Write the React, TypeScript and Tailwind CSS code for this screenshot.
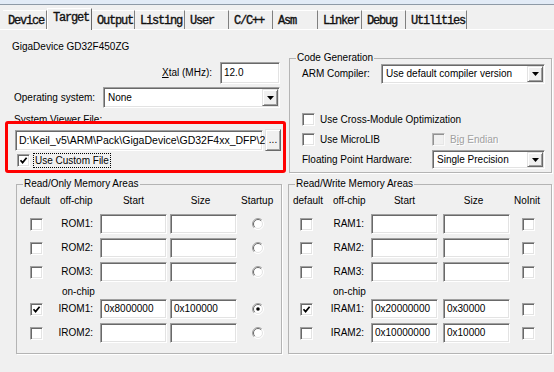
import React from "react";

const SUNKEN =
  "border border-t-[#a0a0a0] border-l-[#a0a0a0] border-b-white border-r-white shadow-[inset_1px_1px_0_#696969,inset_-1px_-1px_0_#e3e3e3]";
const RAISED =
  "border border-t-[#e3e3e3] border-l-[#e3e3e3] border-b-[#696969] border-r-[#696969] shadow-[inset_1px_1px_0_#ffffff,inset_-1px_-1px_0_#a0a0a0] bg-[#f0f0f0]";

function Check({ checked, disabled }: { checked?: boolean; disabled?: boolean }) {
  return (
    <div
      className={`w-[13px] h-[13px] shrink-0 flex items-center justify-center ${SUNKEN} ${
        disabled ? "bg-[#f0f0f0] opacity-70" : "bg-white"
      }`}
    >
      {checked && (
        <svg width="9" height="9" viewBox="0 0 9 9">
          <path d="M1.5 4.2 L3.6 6.6 L7.6 1.8" fill="none" stroke="#000" strokeWidth="1.7" />
        </svg>
      )}
    </div>
  );
}

function Radio({ on }: { on?: boolean }) {
  return (
    <svg width="12" height="12" viewBox="0 0 12 12" className="shrink-0">
      <circle cx="6" cy="6" r="5.5" fill="#ffffff" />
      <path d="M2.1 9.9 A5.5 5.5 0 0 1 9.9 2.1" stroke="#a0a0a0" strokeWidth="1" fill="none" />
      <path d="M2.8 9.2 A4.5 4.5 0 0 1 9.2 2.8" stroke="#696969" strokeWidth="1" fill="none" />
      <path d="M9.9 2.1 A5.5 5.5 0 0 1 2.1 9.9" stroke="#ffffff" strokeWidth="1" fill="none" />
      <path d="M9.2 2.8 A4.5 4.5 0 0 1 2.8 9.2" stroke="#e3e3e3" strokeWidth="1" fill="none" />
      {on && <circle cx="6" cy="6" r="1.8" fill="#000" />}
    </svg>
  );
}

function Arrow() {
  return (
    <div className={`w-[16px] shrink-0 flex items-center justify-center ${RAISED}`}>
      <svg width="7" height="4" viewBox="0 0 7 4">
        <path d="M0 0 H7 L3.5 4 Z" fill="#000" />
      </svg>
    </div>
  );
}

function Field({ value, className }: { value?: string; className: string }) {
  return (
    <div className={`${SUNKEN} bg-white shrink-0 flex items-center pl-[3px] whitespace-nowrap ${className}`}>
      {value}
    </div>
  );
}

function Select({ value, className }: { value: string; className: string }) {
  return (
    <div className={`${SUNKEN} bg-white shrink-0 flex items-stretch p-[1px] ${className}`}>
      <div className="flex-1 flex items-center pl-[3px] whitespace-nowrap">{value}</div>
      <Arrow />
    </div>
  );
}

const tabs = [
  { label: "Device", w: "w-[44px]" },
  { label: "Target", w: "w-[45px]", sel: true },
  { label: "Output", w: "w-[43px]" },
  { label: "Listing", w: "w-[50px]" },
  { label: "User", w: "w-[44px]" },
  { label: "C/C++", w: "w-[44px]" },
  { label: "Asm", w: "w-[45px]" },
  { label: "Linker", w: "w-[44px]" },
  { label: "Debug", w: "w-[44px]" },
  { label: "Utilities", w: "w-[61px]" },
];

const romRows = [
  { cb: false, label: "ROM1:", start: "", size: "", on: false },
  { cb: false, label: "ROM2:", start: "", size: "", on: false },
  { cb: false, label: "ROM3:", start: "", size: "", on: false },
];
const iromRows = [
  { cb: true, label: "IROM1:", start: "0x8000000", size: "0x100000", on: true },
  { cb: false, label: "IROM2:", start: "", size: "", on: false },
];
const ramRows = [
  { cb: false, label: "RAM1:", start: "", size: "" },
  { cb: false, label: "RAM2:", start: "", size: "" },
  { cb: false, label: "RAM3:", start: "", size: "" },
];
const iramRows = [
  { cb: true, label: "IRAM1:", start: "0x20000000", size: "0x30000" },
  { cb: false, label: "IRAM2:", start: "0x10000000", size: "0x10000" },
];

function RomRow({ r }: { r: { cb: boolean; label: string; start: string; size: string; on: boolean } }) {
  return (
    <div className="flex items-center h-[20px]">
      <div className="ml-[13px]">
        <Check checked={r.cb} />
      </div>
      <div className="w-[54px] text-right pr-[4px]">{r.label}</div>
      <Field value={r.start} className="ml-[3px] w-[67px] h-[20px]" />
      <Field value={r.size} className="ml-[3px] w-[67px] h-[20px]" />
      <div className="ml-[15px]">
        <Radio on={r.on} />
      </div>
    </div>
  );
}

function RamRow({ r }: { r: { cb: boolean; label: string; start: string; size: string } }) {
  return (
    <div className="flex items-center h-[20px]">
      <div className="ml-[11px]">
        <Check checked={r.cb} />
      </div>
      <div className="w-[55px] text-right pr-[4px]">{r.label}</div>
      <Field value={r.start} className="ml-[3px] w-[67px] h-[20px]" />
      <Field value={r.size} className="ml-[5px] w-[67px] h-[20px]" />
      <div className="ml-[12px]">
        <Check />
      </div>
    </div>
  );
}

export default function App() {
  return (
    <div className="w-[554px] h-[372px] overflow-hidden bg-[#f0f0f0] text-black text-[10px] leading-[12px] font-['Liberation_Sans',Arial,sans-serif]">
      {/* window edge */}
      <div className="h-[4px] bg-[#e2ebf6]" />
      <div className="h-[1px] bg-[#8e9aa6]" />

      {/* tabs */}
      <div className="h-[24px] flex items-end pl-[3px] font-['Liberation_Mono','Courier_New',monospace] text-[12px] tracking-[-1.2px] text-[#111]">
        {tabs.map((t) =>
          t.sel ? (
            <div
              key={t.label}
              className={`${t.w} h-[22px] -mb-px relative z-10 bg-[#f0f0f0] border-l border-t border-l-white border-t-white border-r border-r-[#696969] pl-[5px] pt-[2px] leading-[14px] [-webkit-text-stroke:0.35px_#111]`}
            >
              {t.label}
            </div>
          ) : (
            <div
              key={t.label}
              className={`${t.w} h-[19px] border-t border-t-white border-r border-r-[#808080] pl-[5px] pt-[3px] leading-[14px] [-webkit-text-stroke:0.35px_#111]`}
            >
              {t.label}
            </div>
          )
        )}
      </div>

      {/* panel */}
      <div className="border-t border-t-white">
        <div className="flex">
          {/* left column */}
          <div className="w-[288px] shrink-0">
            <div className="pt-[11px] pl-[12px]">GigaDevice GD32F450ZG</div>
            <div className="mt-[9px] h-[22px] flex items-center justify-end pr-[8px]">
              <span>
                <span className="underline">X</span>tal (MHz):
              </span>
              <Field value="12.0" className="ml-[8px] w-[60px] h-[22px]" />
            </div>
            <div className="mt-[3px] h-[21px] flex items-center">
              <div className="w-[103px] pl-[14px]">Operating system:</div>
              <Select value="None" className="w-[177px] h-[21px]" />
            </div>
            <div className="mt-[6px] pl-[14px]">System Viewer File:</div>
            <div className="-mt-[5px] ml-[5px] w-[281px] h-[52px] border-[3px] border-[#ff0000] rounded-[3px] relative bg-[#f0f0f0]">
              <div className="pt-[5px] pl-[7px] flex items-center">
                <Field
                  value="D:\Keil_v5\ARM\Pack\GigaDevice\GD32F4xx_DFP\2"
                  className="w-[248px] h-[21px] text-[10.5px]"
                />
                <div className={`ml-[2px] w-[16px] h-[22px] flex items-end justify-center pb-[4px] ${RAISED}`}>
                  ...
                </div>
              </div>
              <div className="mt-[2px] flex items-center h-[15px]">
                <div className="ml-[9px]">
                  <Check checked />
                </div>
                <div className="ml-[3px] border border-dotted border-black px-[1px] leading-[13px]">
                  Use Custom File
                </div>
              </div>
            </div>
          </div>

          {/* Code generation */}
          <fieldset className="mt-[22px] ml-[1px] w-[263px] h-[121px] border border-[#b4b4b4] shadow-[1px_1px_0_#ffffff]">
            <legend className="ml-[6px] px-[1px]">Code Generation</legend>
            <div className="h-[20px] flex items-center">
              <div className="w-[91px] pl-[12px]">ARM Compiler:</div>
              <Select value="Use default compiler version" className="w-[164px] h-[20px]" />
            </div>
            <div className="mt-[29px] h-[13px] flex items-center">
              <div className="ml-[12px]">
                <Check />
              </div>
              <div className="ml-[5px]">Use Cross-Module Optimization</div>
            </div>
            <div className="mt-[7px] h-[13px] flex items-center">
              <div className="w-[142px] flex items-center">
                <div className="ml-[12px]">
                  <Check />
                </div>
                <div className="ml-[5px]">Use MicroLIB</div>
              </div>
              <Check disabled />
              <div className="ml-[5px] text-[#a0a0a0] [text-shadow:1px_1px_0_#ffffff]">
                B<span className="underline">i</span>g Endian
              </div>
            </div>
            <div className="mt-[4px] h-[19px] flex items-center">
              <div className="w-[142px] pl-[12px]">Floating Point Hardware:</div>
              <Select value="Single Precision" className="w-[113px] h-[19px]" />
            </div>
          </fieldset>
        </div>

        {/* memory areas */}
        <div className="flex mt-[5px]">
          <fieldset className="ml-[16px] w-[266px] h-[176px] border border-[#b4b4b4] shadow-[1px_1px_0_#ffffff]">
            <legend className="ml-[6px] px-[1px]">Read/Only Memory Areas</legend>
            <div className="mt-[5px] flex">
              <div className="w-[40px] pl-[3px]">default</div>
              <div className="w-[40px] pl-[3px]">off-chip</div>
              <div className="ml-[3px] w-[67px] text-center">Start</div>
              <div className="ml-[3px] w-[67px] text-center pr-[6px]">Size</div>
              <div className="ml-[4px]">Startup</div>
            </div>
            <div className="mt-[7px] flex flex-col gap-[4px]">
              {romRows.map((r) => (
                <RomRow key={r.label} r={r} />
              ))}
            </div>
            <div className="mt-[4px] pl-[45px]">on-chip</div>
            <div className="mt-[1px] flex flex-col gap-[4px]">
              {iromRows.map((r) => (
                <RomRow key={r.label} r={r} />
              ))}
            </div>
          </fieldset>

          <fieldset className="ml-[6px] w-[264px] h-[176px] border border-[#b4b4b4] shadow-[1px_1px_0_#ffffff]">
            <legend className="ml-[6px] px-[1px]">Read/Write Memory Areas</legend>
            <div className="mt-[5px] flex">
              <div className="w-[40px] pl-[4px]">default</div>
              <div className="w-[39px] pl-[4px]">off-chip</div>
              <div className="ml-[3px] w-[67px] text-center">Start</div>
              <div className="ml-[5px] w-[67px] text-center pr-[6px]">Size</div>
              <div className="ml-[4px]">NoInit</div>
            </div>
            <div className="mt-[7px] flex flex-col gap-[4px]">
              {ramRows.map((r) => (
                <RamRow key={r.label} r={r} />
              ))}
            </div>
            <div className="mt-[4px] pl-[44px]">on-chip</div>
            <div className="mt-[1px] flex flex-col gap-[4px]">
              {iramRows.map((r) => (
                <RamRow key={r.label} r={r} />
              ))}
            </div>
          </fieldset>
        </div>
      </div>
    </div>
  );
}
